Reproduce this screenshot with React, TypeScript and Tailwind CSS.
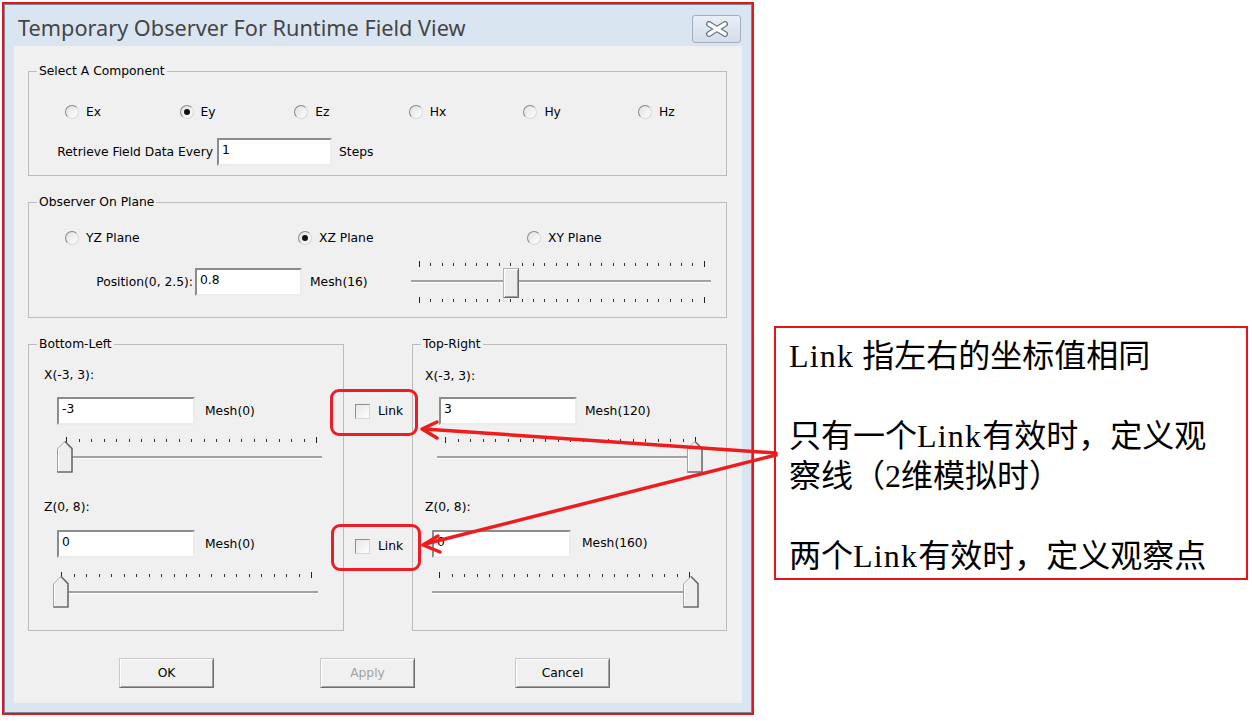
import React from "react";

// small windows-7 style controls
const Radio = ({ label, checked }: { label: string; checked?: boolean }) => (
  <div className="flex items-center">
    <span className="flex h-[14px] w-[14px] items-center justify-center rounded-full border border-t-[#8a8a8a] border-l-[#8a8a8a] border-r-[#d8d8d8] border-b-[#d8d8d8] bg-linear-to-br from-[#e2e2e2] to-white">
      {checked && <span className="h-[6px] w-[6px] rounded-full bg-[#111]" />}
    </span>
    <span className="ml-[7px]">{label}</span>
  </div>
);

const Field = ({ value, className }: { value: string; className: string }) => (
  <div
    className={`h-[28px] border-2 border-t-[#8c8c8c] border-l-[#8c8c8c] border-r-[#ececec] border-b-[#ececec] bg-white pl-[3px] pt-[1px] leading-[18px] ${className}`}
  >
    {value}
  </div>
);

const Ticks = ({ n, className }: { n: number; className: string }) => (
  <div className={`flex h-[6px] items-start justify-between ${className}`}>
    {Array.from({ length: n }).map((_, i) => (
      <span
        key={i}
        className={i === 0 || i === n - 1 ? "h-[6px] w-px bg-[#222]" : "mt-[2px] h-[3px] w-px bg-[#333]"}
      />
    ))}
  </div>
);

const ThumbUp = () => (
  <svg width="16" height="32" viewBox="0 0 16 32">
    <polygon points="0.5,8 8,0.5 15.5,8 15.5,31.5 0.5,31.5" fill="#eeeeee" />
    <path d="M1.5 31 V8.4 L8 1.8" stroke="#ffffff" strokeWidth="1" fill="none" />
    <path d="M0.5 31.5 V8 L8 0.5" stroke="#a3a3a3" strokeWidth="1" fill="none" />
    <path d="M8 0.5 L15 7.6 V31 H0.5" stroke="#6b6b6b" strokeWidth="1.6" fill="none" />
  </svg>
);

// trackbar with ticks above only and a pointed thumb
const SliderUp = ({ className, tickPad, thumbLeft }: { className: string; tickPad: string; thumbLeft: string }) => (
  <div className={`relative h-[36px] ${className}`}>
    <Ticks n={21} className={tickPad} />
    <div className="mt-[13px] h-[2px] bg-[#a2a2a2] shadow-[0_1px_0_#ffffff]" />
    <div className={`absolute top-[4px] ${thumbLeft}`}>
      <ThumbUp />
    </div>
  </div>
);

const Link = ({ boxClass }: { boxClass: string }) => (
  <div className="relative flex h-[16px] items-center">
    <span className="h-[15px] w-[15px] border border-t-[#8e8e8e] border-l-[#8e8e8e] border-r-[#d6d6d6] border-b-[#d6d6d6] bg-linear-to-br from-[#e6e6e6] to-white" />
    <span className="ml-[8px]">Link</span>
    <span className={`pointer-events-none absolute h-[47px] rounded-[9px] border-[3px] border-[#ee1c24] ${boxClass}`} />
  </div>
);

const Button = ({ label, disabled, className }: { label: string; disabled?: boolean; className: string }) => (
  <div
    className={`flex h-[30px] w-[95px] items-center justify-center border border-t-[#c9c9c9] border-l-[#c9c9c9] border-r-[#6f6f6f] border-b-[#6f6f6f] bg-[#f0f0f0] shadow-[inset_1px_1px_0_#ffffff,inset_-1px_-1px_0_#a0a0a0] ${
      disabled ? "text-[#a3a3a3]" : "text-black"
    } ${className}`}
  >
    {label}
  </div>
);

const App = () => {
  return (
    <div className="relative flex h-[721px] w-[1252px] items-start overflow-hidden bg-white font-['DejaVu_Sans',sans-serif] text-[12.3px] leading-[16px] text-black">
      {/* dialog */}
      <div className="ml-[2px] mt-[2px] h-[713px] w-[752px] border-2 border-[#e3151d]">
        <div className="flex h-full flex-col border border-[#7c8797] bg-[#dae5f2] px-[9px] pb-[9px]">
          {/* title bar */}
          <div className="flex h-[41px] items-start">
            <div className="mt-[10px] pl-[4px] font-['Noto_Sans',sans-serif] text-[21.7px] leading-[26px] text-[#454545]">
              Temporary Observer For Runtime Field View
            </div>
            <div className="ml-auto mr-[1px] mt-[10px] flex h-[28px] w-[49px] items-center justify-center rounded-[3px] border border-[#a3afc0] bg-linear-to-b from-[#e9eff6] to-[#d3ddea]">
              <svg width="24" height="16" viewBox="0 0 24 16">
                <path d="M4 3 L20 13 M20 3 L4 13" stroke="#6d7785" strokeWidth="6" strokeLinecap="round" />
                <path d="M4 3 L20 13 M20 3 L4 13" stroke="#ffffff" strokeWidth="3.4" strokeLinecap="round" />
              </svg>
            </div>
          </div>

          {/* client area */}
          <div className="flex flex-1 flex-col bg-[#f0f0f0] pl-[14px] pr-[15px]">
            {/* Select A Component */}
            <fieldset className="mt-[17px] h-[113px] min-w-0 border border-[#bcbcbc]">
              <legend className="ml-[8px] px-[2px]">Select A Component</legend>
              <div className="ml-[36px] mt-[25px] grid grid-cols-[repeat(5,114.6px)_auto]">
                <Radio label="Ex" />
                <Radio label="Ey" checked />
                <Radio label="Ez" />
                <Radio label="Hx" />
                <Radio label="Hy" />
                <Radio label="Hz" />
              </div>
              <div className="mt-[18px] flex items-center">
                <div className="w-[184px] text-right">Retrieve Field Data Every</div>
                <Field value="1" className="ml-[4px] w-[115px]" />
                <div className="ml-[7px]">Steps</div>
              </div>
            </fieldset>

            {/* Observer On Plane */}
            <fieldset className="mt-[18px] h-[124px] min-w-0 border border-[#bcbcbc]">
              <legend className="ml-[8px] px-[2px]">Observer On Plane</legend>
              <div className="ml-[36px] mt-[20px] flex">
                <div className="w-[233px]">
                  <Radio label="YZ Plane" />
                </div>
                <div className="w-[229px]">
                  <Radio label="XZ Plane" checked />
                </div>
                <Radio label="XY Plane" />
              </div>
              <div className="mt-[15px] flex items-start">
                <div className="mt-[7px] flex h-[28px] w-[382px] items-center">
                  <div className="w-[164px] text-right">Position(0, 2.5):</div>
                  <Field value="0.8" className="ml-[2px] w-[107px]" />
                  <div className="ml-[8px]">Mesh(16)</div>
                </div>
                <div className="relative flex h-[42px] w-[300px] flex-col">
                  <Ticks n={26} className="pl-[8px] pr-[6px]" />
                  <div className="mt-[13px] h-[2px] bg-[#a2a2a2] shadow-[0_1px_0_#ffffff]" />
                  <Ticks n={26} className="mt-auto pl-[8px] pr-[6px]" />
                  <div className="absolute left-[92px] top-[7px] h-[30px] w-[16px] border border-t-[#b4b4b4] border-l-[#b4b4b4] border-r-[#6b6b6b] border-b-[#6b6b6b] bg-[#ececec] shadow-[inset_1px_1px_0_#ffffff,inset_-1px_-1px_0_#9c9c9c]" />
                </div>
              </div>
            </fieldset>

            {/* Bottom-Left / Link / Top-Right */}
            <div className="mt-[18px] flex">
              <fieldset className="h-[295px] w-[316px] min-w-0 border border-[#bcbcbc]">
                <legend className="ml-[8px] px-[2px]">Bottom-Left</legend>
                <div className="ml-[15px] mt-[15px]">X(-3, 3):</div>
                <div className="mt-[14px] flex items-center">
                  <Field value="-3" className="ml-[28px] w-[138px]" />
                  <div className="ml-[10px]">Mesh(0)</div>
                </div>
                <SliderUp className="ml-[28px] mt-[12px] w-[265px]" tickPad="pl-[9px] pr-[5px]" thumbLeft="left-0" />
                <div className="ml-[15px] mt-[26px]">Z(0, 8):</div>
                <div className="mt-[15px] flex items-center">
                  <Field value="0" className="ml-[28px] w-[138px]" />
                  <div className="ml-[10px]">Mesh(0)</div>
                </div>
                <SliderUp className="ml-[24px] mt-[14px] w-[265px]" tickPad="pl-[8px] pr-[6px]" thumbLeft="left-0" />
              </fieldset>

              <div className="flex w-[68px] flex-col pl-[11px]">
                <div className="mt-[67px]">
                  <Link boxClass="-left-[25px] -top-[14px] w-[88px]" />
                </div>
                <div className="mt-[119px]">
                  <Link boxClass="-left-[24px] -top-[14px] w-[90px]" />
                </div>
              </div>

              <fieldset className="h-[295px] w-[315px] min-w-0 border border-[#bcbcbc]">
                <legend className="ml-[8px] px-[2px]">Top-Right</legend>
                <div className="ml-[12px] mt-[16px]">X(-3, 3):</div>
                <div className="mt-[13px] flex items-center">
                  <Field value="3" className="ml-[26px] w-[138px]" />
                  <div className="ml-[8px]">Mesh(120)</div>
                </div>
                <SliderUp className="ml-[24px] mt-[12px] w-[266px]" tickPad="pl-[8px] pr-[7px]" thumbLeft="left-[250px]" />
                <div className="ml-[12px] mt-[26px]">Z(0, 8):</div>
                <div className="mt-[15px] flex items-center">
                  <Field value="0" className="ml-[19px] w-[139px]" />
                  <div className="ml-[11px] -mt-[2px]">Mesh(160)</div>
                </div>
                <SliderUp className="ml-[19px] mt-[14px] w-[266px]" tickPad="pl-[7px] pr-[8px]" thumbLeft="left-[251px]" />
              </fieldset>
            </div>

            {/* buttons */}
            <div className="mt-[27px] flex">
              <Button label="OK" className="ml-[91px]" />
              <Button label="Apply" disabled className="ml-[106px]" />
              <Button label="Cancel" className="ml-[100px]" />
            </div>
          </div>
        </div>
      </div>

      {/* note */}
      <div className="ml-[20px] mt-[326px] h-[254px] w-[474px] border-2 border-[#e8141c] bg-white pl-[13px] pt-[8px] font-['Liberation_Serif','Noto_Sans_CJK_SC',serif] text-[32px] leading-[40px] text-black">
        <p className="whitespace-nowrap">
          <span className="tracking-[1.2px]">Link</span> 指左右的坐标值相同
        </p>
        <p className="mt-[40px] whitespace-nowrap">
          只有一个<span className="tracking-[1.2px]">Link</span>有效时，定义观
          <br />
          察线（2维模拟时）
        </p>
        <p className="mt-[40px] whitespace-nowrap">
          两个<span className="tracking-[1.2px]">Link</span>有效时，定义观察点
        </p>
      </div>

      {/* arrows */}
      <svg className="pointer-events-none absolute left-0 top-0" width="1252" height="721">
        <g stroke="#ee1c1c" strokeWidth="3.5" strokeLinecap="round" strokeLinejoin="round" fill="none">
          <path d="M776 453 L424 429" />
          <path d="M437 422 L422 429 L437 438" />
          <path d="M776 455 L425 544" />
          <path d="M438 536 L423 545 L440 552" />
        </g>
      </svg>
    </div>
  );
};

export default App;
